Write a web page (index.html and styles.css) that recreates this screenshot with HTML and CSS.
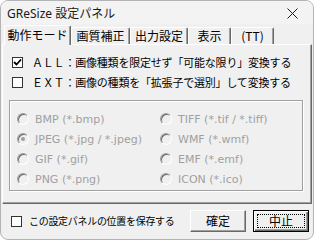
FILE: index.html
```html
<!DOCTYPE html>
<html lang="ja">
<head>
<meta charset="utf-8">
<title>GReSize 設定パネル</title>
<link rel="stylesheet" href="styles.css">
</head>
<body>
<div class="window">
  <div class="titlebar">
    <span class="title">GReSize 設定パネル</span>
    <svg class="close" width="11" height="11" viewBox="0 0 11 11"><path d="M0.5 0.5 L10.5 10.5 M10.5 0.5 L0.5 10.5" stroke="#1a1a1a" stroke-width="1" fill="none"/></svg>
  </div>
  <div class="client">
    <div class="tabs">
      <div class="tab selected w1">動作モード</div>
      <div class="tab w2">画質補正</div>
      <div class="tab w3">出力設定</div>
      <div class="tab w4">表示</div>
      <div class="tab w5">(TT)</div>
    </div>
    <div class="panel">
      <div class="check-row">
        <span class="cb"><svg width="9" height="9" viewBox="0 0 9 9"><path d="M1 4 L3.5 6.5 L8 1.5" stroke="#000" stroke-width="1.8" fill="none"/></svg></span>
        <span class="jp">ＡＬＬ：画像種類を限定せず「可能な限り」変換する</span>
      </div>
      <div class="check-row">
        <span class="cb"></span>
        <span class="jp">ＥＸＴ：画像の種類を「拡張子で選別」して変換する</span>
      </div>
      <div class="group">
        <div class="radio-row"><span class="rb"></span><span class="rl">BMP (*.bmp)</span></div>
        <div class="radio-row"><span class="rb"></span><span class="rl">TIFF (*.tif / *.tiff)</span></div>
        <div class="radio-row"><span class="rb on"></span><span class="rl">JPEG (*.jpg / *.jpeg)</span></div>
        <div class="radio-row"><span class="rb"></span><span class="rl">WMF (*.wmf)</span></div>
        <div class="radio-row"><span class="rb"></span><span class="rl">GIF (*.gif)</span></div>
        <div class="radio-row"><span class="rb"></span><span class="rl">EMF (*.emf)</span></div>
        <div class="radio-row"><span class="rb"></span><span class="rl">PNG (*.png)</span></div>
        <div class="radio-row"><span class="rb"></span><span class="rl">ICON (*.ico)</span></div>
      </div>
    </div>
    <div class="footer">
      <div class="save">
        <span class="cb"></span>
        <span class="save-label">この設定パネルの位置を保存する</span>
      </div>
      <div class="buttons">
        <div class="btn">確定</div>
        <div class="btn default"><span class="focus">中止</span></div>
      </div>
    </div>
  </div>
</div>
</body>
</html>
```

FILE: styles.css
```css
html, body {
  margin: 0;
  padding: 0;
  background: #ffffff;
}
.window {
  width: 314px;
  height: 240px;
  box-sizing: border-box;
  border: 1px solid #b4b4b4;
  border-radius: 8px;
  overflow: hidden;
  display: flex;
  flex-direction: column;
  background: #f0f0f0;
  font-family: "Noto Sans CJK JP", sans-serif;
  color: #000;
}
.titlebar {
  height: 23px;
  flex: none;
  display: flex;
  align-items: center;
  justify-content: space-between;
  padding: 0 15px 0 6px;
  background: #f3f3f3;
}
.title {
  font-family: "Noto Sans", "Noto Sans CJK JP", sans-serif;
  font-size: 12px;
  line-height: 14px;
  color: #1a1a1a;
  margin-top: 3px;
}
.close {
  display: block;
  margin-top: 2px;
}
.client {
  flex: 1;
  display: flex;
  flex-direction: column;
}
.tabs {
  height: 20px;
  display: flex;
  align-items: flex-end;
  padding-left: 3px;
  position: relative;
  z-index: 1;
}
.tab {
  box-sizing: border-box;
  height: 17px;
  border-top: 1px solid #ffffff;
  border-left: 1px solid #ffffff;
  border-right: 1px solid #696969;
  box-shadow: inset -1px 0 0 #a0a0a0;
  border-radius: 2px 2px 0 0;
  font-size: 12px;
  line-height: 16px;
  text-align: center;
  color: #000;
  background: #f0f0f0;
}
.tab.selected {
  height: 20px;
  margin-bottom: -1px;
  line-height: 18px;
}
.w1 { width: 67px; }
.w2 { width: 59px; }
.w3 { width: 58px; }
.w4 { width: 43px; }
.w5 { width: 43px; }
.panel {
  box-sizing: border-box;
  margin: 0 1px 0 1px;
  height: 160px;
  border-top: 1px solid #ffffff;
  border-left: 1px solid #ffffff;
  border-right: 1px solid #696969;
  border-bottom: 1px solid #696969;
  box-shadow: inset -1px -1px 0 #a0a0a0;
  padding: 7px 0 0 9px;
}
.check-row {
  height: 20px;
  display: flex;
  align-items: center;
}
.cb {
  box-sizing: border-box;
  width: 11px;
  height: 11px;
  flex: none;
  background: #ffffff;
  border: 1px solid #333333;
  display: flex;
  align-items: center;
  justify-content: center;
}
.cb svg { display: block; }
.jp {
  margin-left: 9px;
  font-size: 11px;
  letter-spacing: -0.2px;
  line-height: 14px;
  color: #000;
}
.group {
  box-sizing: border-box;
  margin: 8px 0 0 -3px;
  width: 294px;
  height: 91px;
  border: 1px solid #a0a0a0;
  box-shadow: inset 1px 1px 0 #ffffff, 1px 1px 0 #ffffff;
  padding: 8px 0 0 7px;
  display: grid;
  grid-template-columns: 143px 1fr;
  grid-auto-rows: 20px;
}
.radio-row {
  display: flex;
  align-items: center;
}
.rb {
  box-sizing: border-box;
  width: 12px;
  height: 12px;
  flex: none;
  border-radius: 50%;
  border: 1px solid;
  border-color: #a0a0a0 #ffffff #ffffff #a0a0a0;
  box-shadow: inset 1px 1px 0 #696969;
  background: #f0f0f0;
  display: flex;
  align-items: center;
  justify-content: center;
}
.rb.on::after {
  content: "";
  width: 4px;
  height: 4px;
  border-radius: 50%;
  background: #a0a0a0;
}
.rl {
  margin-left: 6px;
  font-family: "DejaVu Sans", sans-serif;
  font-size: 11px;
  line-height: 13px;
  color: #a0a0a0;
}
.footer {
  flex: 1;
  display: flex;
  justify-content: space-between;
  align-items: flex-start;
  padding: 6px 4px 0 10px;
}
.save {
  display: flex;
  align-items: center;
  height: 22px;
}
.save-label {
  margin-left: 7px;
  font-size: 10px;
  line-height: 12px;
  letter-spacing: -0.3px;
  color: #000;
}
.buttons {
  display: flex;
  gap: 7px;
}
.btn {
  box-sizing: border-box;
  width: 56px;
  height: 22px;
  border-top: 1px solid #ffffff;
  border-left: 1px solid #ffffff;
  border-right: 1px solid #696969;
  border-bottom: 1px solid #696969;
  box-shadow: inset -1px -1px 0 #a0a0a0;
  background: #f0f0f0;
  font-size: 12px;
  line-height: 19px;
  text-align: center;
  color: #000;
}
.btn.default {
  border: 1px solid #000000;
  box-shadow: inset 1px 1px 0 #ffffff, inset -1px -1px 0 #696969, inset -2px -2px 0 #a0a0a0;
  padding: 3px;
}
.focus {
  display: block;
  height: 100%;
  box-sizing: border-box;
  border: 1px dotted #000;
  line-height: 12px;
}
```
